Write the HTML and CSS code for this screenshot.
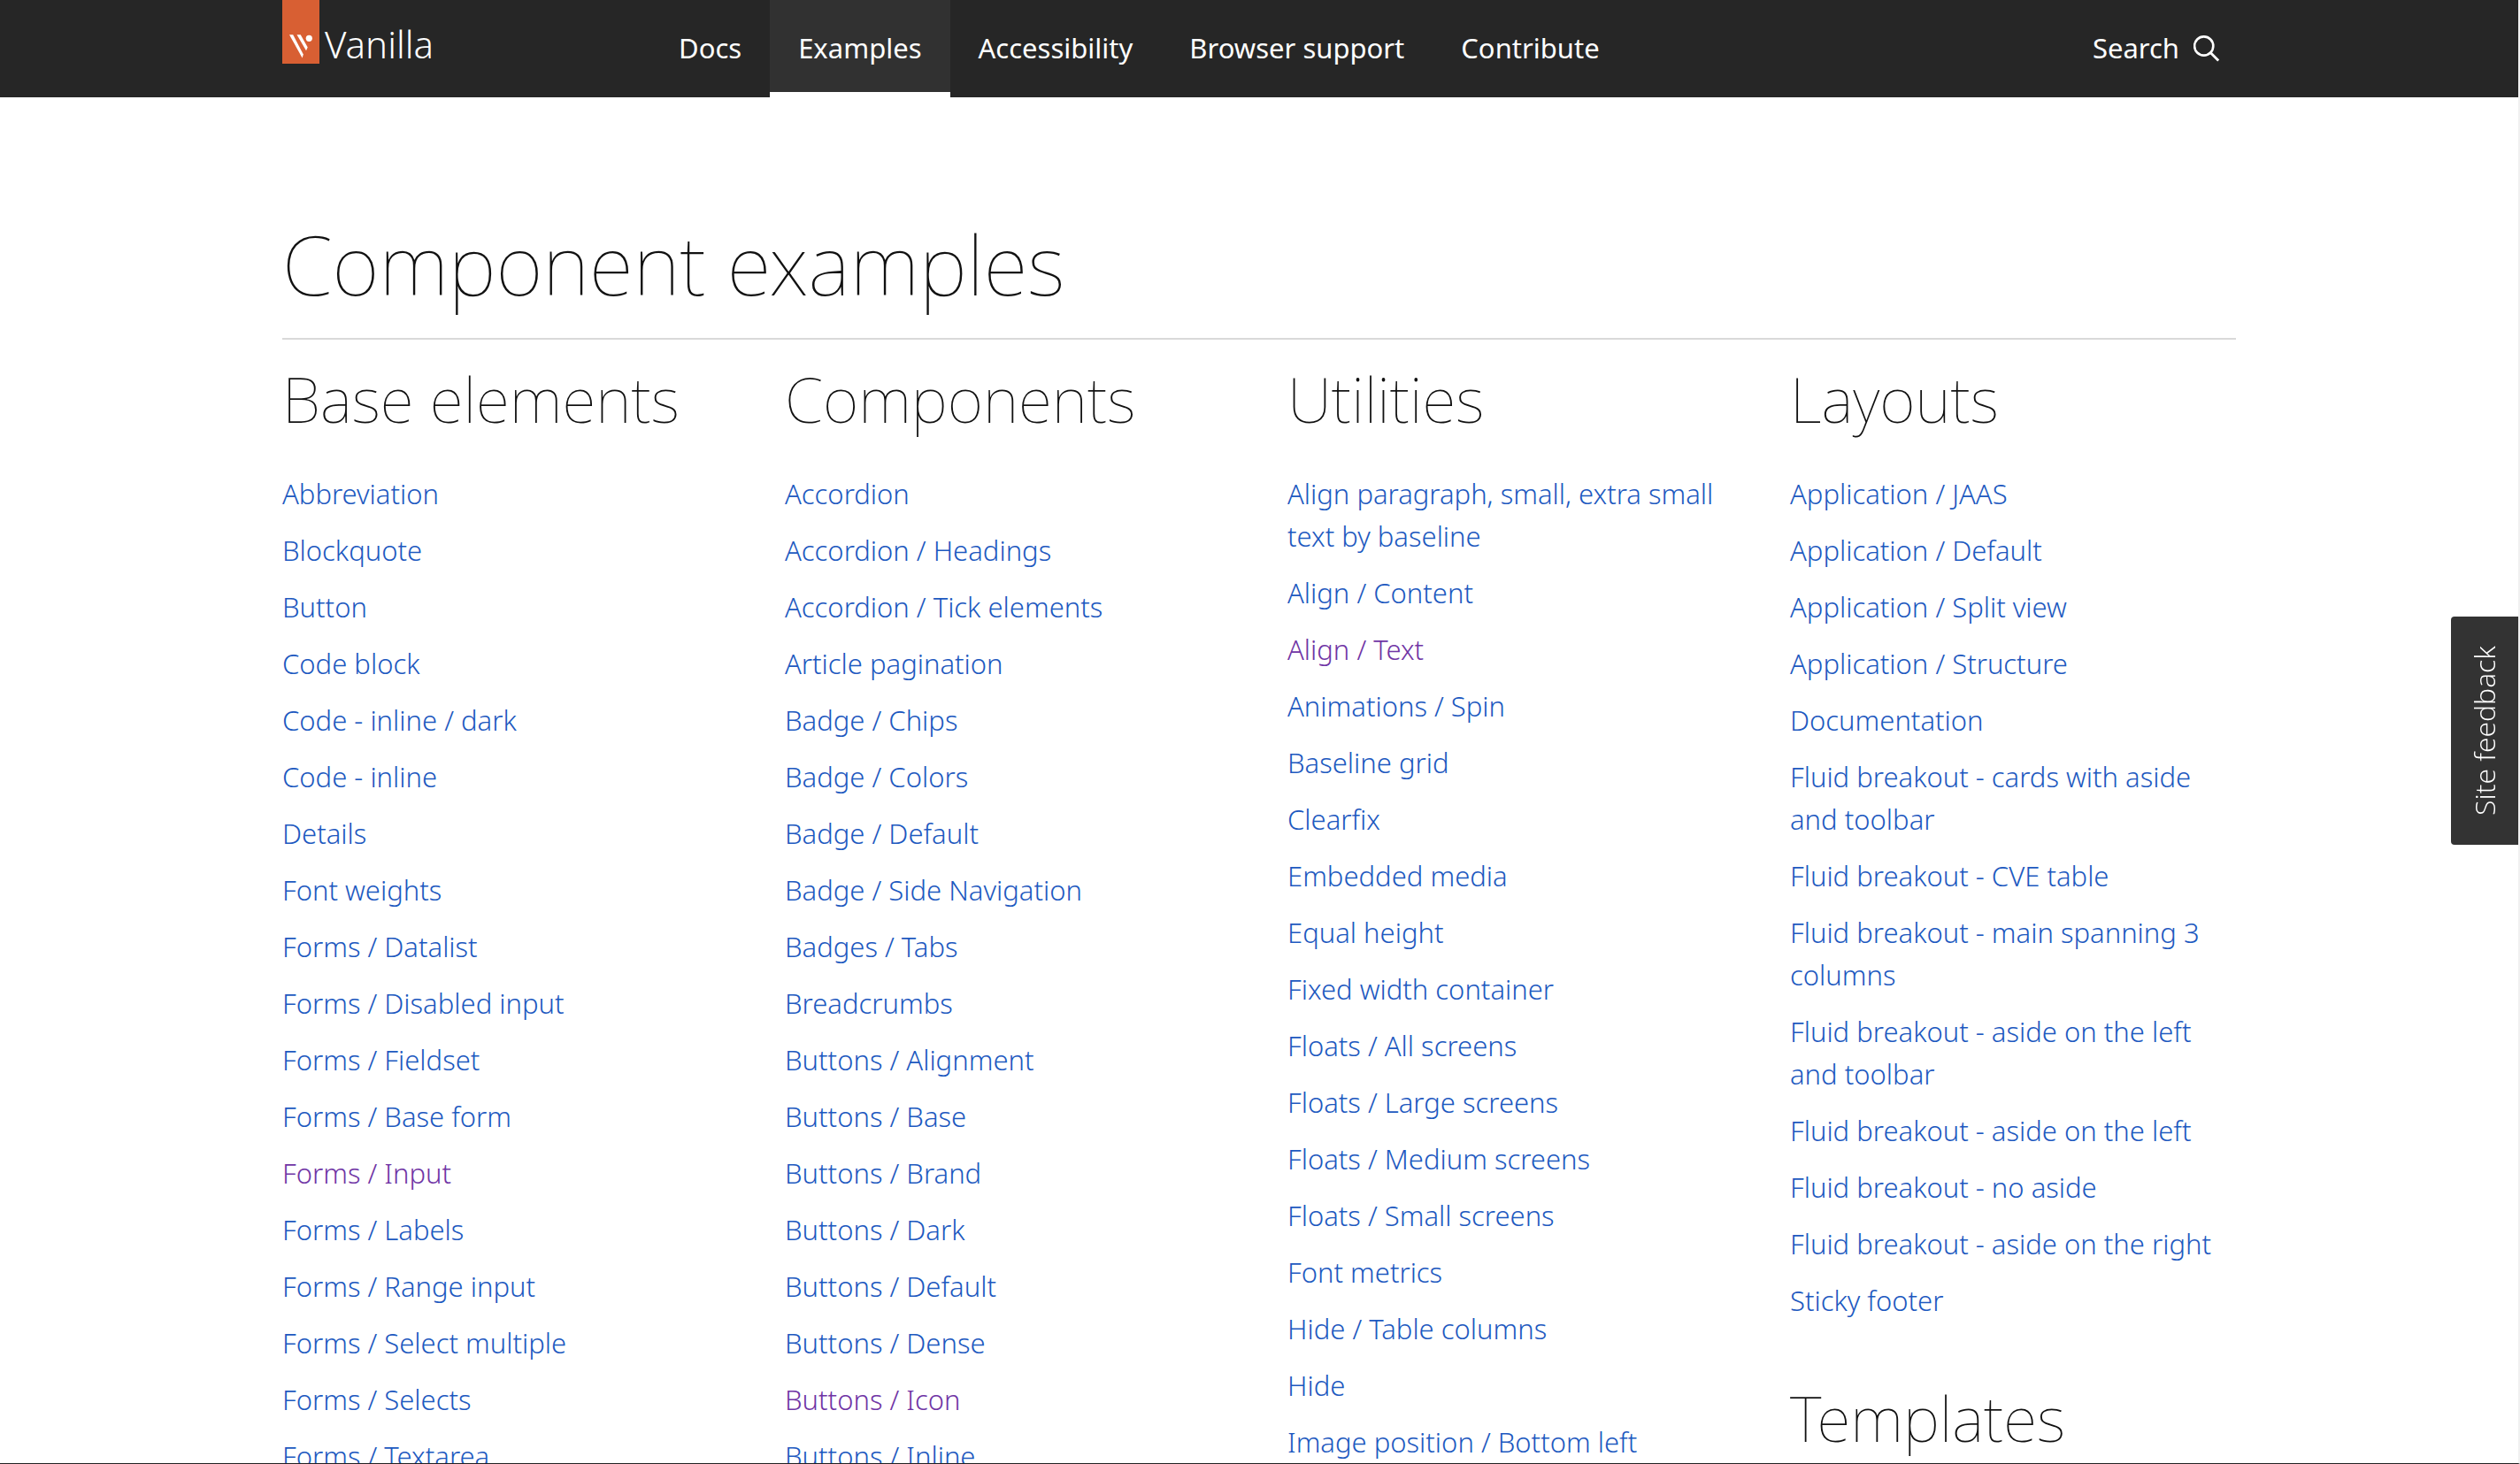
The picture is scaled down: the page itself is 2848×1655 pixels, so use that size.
FILE: index.html
```html
<!DOCTYPE html>
<html lang="en">
<head>
<meta charset="utf-8">
<title>Component examples | Vanilla</title>
<link rel="stylesheet" href="styles.css">
</head>
<body>
<header class="navigation">
  <div class="navigation-row">
    <a class="logo" href="#">
      <span class="logo-tag">
        <svg class="logo-mark" viewBox="0 0 42 72" aria-hidden="true">
          <path d="M8 39.300h4.200l11.600 22.200-1.200 4z" fill="#fff"/>
          <path d="M16.500 39.300h4.200l8 14.200-1.700 3.700z" fill="#fff"/>
          <circle cx="30.300" cy="43.300" r="3.600" fill="#fff"/>
        </svg>
      </span>
      <span class="logo-name">Vanilla</span>
    </a>
    <nav class="navigation-links" aria-label="Main">
      <a href="#">Docs</a>
      <a class="is-selected" href="#" aria-current="page">Examples</a>
      <a href="#">Accessibility</a>
      <a href="#">Browser support</a>
      <a href="#">Contribute</a>
    </nav>
    <button class="search" type="button">Search
      <svg class="search-icon" viewBox="0 0 32 32" aria-hidden="true">
        <circle cx="11.700" cy="14" r="10.600" fill="none" stroke="#fff" stroke-width="2.600"/>
        <path d="M19.200 21.600l9 9" fill="none" stroke="#fff" stroke-width="2.800"/>
      </svg>
    </button>
  </div>
</header>
<main class="content">
  <h1>Component examples</h1>
  <div class="columns">
    <section>
      <h2>Base elements</h2>
      <ul>
        <li><a href="#">Abbreviation</a></li>
        <li><a href="#">Blockquote</a></li>
        <li><a href="#">Button</a></li>
        <li><a href="#">Code block</a></li>
        <li><a href="#">Code - inline / dark</a></li>
        <li><a href="#">Code - inline</a></li>
        <li><a href="#">Details</a></li>
        <li><a href="#">Font weights</a></li>
        <li><a href="#">Forms / Datalist</a></li>
        <li><a href="#">Forms / Disabled input</a></li>
        <li><a href="#">Forms / Fieldset</a></li>
        <li><a href="#">Forms / Base form</a></li>
        <li><a class="is-visited" href="#">Forms / Input</a></li>
        <li><a href="#">Forms / Labels</a></li>
        <li><a href="#">Forms / Range input</a></li>
        <li><a href="#">Forms / Select multiple</a></li>
        <li><a href="#">Forms / Selects</a></li>
        <li><a href="#">Forms / Textarea</a></li>
      </ul>
    </section>
    <section>
      <h2>Components</h2>
      <ul>
        <li><a href="#">Accordion</a></li>
        <li><a href="#">Accordion / Headings</a></li>
        <li><a href="#">Accordion / Tick elements</a></li>
        <li><a href="#">Article pagination</a></li>
        <li><a href="#">Badge / Chips</a></li>
        <li><a href="#">Badge / Colors</a></li>
        <li><a href="#">Badge / Default</a></li>
        <li><a href="#">Badge / Side Navigation</a></li>
        <li><a href="#">Badges / Tabs</a></li>
        <li><a href="#">Breadcrumbs</a></li>
        <li><a href="#">Buttons / Alignment</a></li>
        <li><a href="#">Buttons / Base</a></li>
        <li><a href="#">Buttons / Brand</a></li>
        <li><a href="#">Buttons / Dark</a></li>
        <li><a href="#">Buttons / Default</a></li>
        <li><a href="#">Buttons / Dense</a></li>
        <li><a class="is-visited" href="#">Buttons / Icon</a></li>
        <li><a href="#">Buttons / Inline</a></li>
      </ul>
    </section>
    <section>
      <h2>Utilities</h2>
      <ul>
        <li><a href="#">Align paragraph, small, extra small text by baseline</a></li>
        <li><a href="#">Align / Content</a></li>
        <li><a class="is-visited" href="#">Align / Text</a></li>
        <li><a href="#">Animations / Spin</a></li>
        <li><a href="#">Baseline grid</a></li>
        <li><a href="#">Clearfix</a></li>
        <li><a href="#">Embedded media</a></li>
        <li><a href="#">Equal height</a></li>
        <li><a href="#">Fixed width container</a></li>
        <li><a href="#">Floats / All screens</a></li>
        <li><a href="#">Floats / Large screens</a></li>
        <li><a href="#">Floats / Medium screens</a></li>
        <li><a href="#">Floats / Small screens</a></li>
        <li><a href="#">Font metrics</a></li>
        <li><a href="#">Hide / Table columns</a></li>
        <li><a href="#">Hide</a></li>
        <li><a href="#">Image position / Bottom left</a></li>
      </ul>
    </section>
    <section>
      <h2>Layouts</h2>
      <ul>
        <li><a href="#">Application / JAAS</a></li>
        <li><a href="#">Application / Default</a></li>
        <li><a href="#">Application / Split view</a></li>
        <li><a href="#">Application / Structure</a></li>
        <li><a href="#">Documentation</a></li>
        <li><a href="#">Fluid breakout - cards with aside and toolbar</a></li>
        <li><a href="#">Fluid breakout - CVE table</a></li>
        <li><a href="#">Fluid breakout - main spanning 3 columns</a></li>
        <li><a href="#">Fluid breakout - aside on the left and toolbar</a></li>
        <li><a href="#">Fluid breakout - aside on the left</a></li>
        <li><a href="#">Fluid breakout - no aside</a></li>
        <li><a href="#">Fluid breakout - aside on the right</a></li>
        <li><a href="#">Sticky footer</a></li>
      </ul>
      <h2>Templates</h2>
    </section>
  </div>
</main>
<button class="feedback" type="button">Site feedback</button>
</body>
</html>
```
FILE: styles.css
```css
* {
  box-sizing: border-box;
}

body {
  margin: 0;
  height: 100vh;
  overflow: hidden;
  border-right: 2px solid #f0f0f0;
  border-bottom: 1px solid #222;
  background: #fff;
  color: #111;
  font: 300 31px/48px "Noto Sans", sans-serif;
}

a {
  color: #1d59c0;
  text-decoration: none;
}

a:hover {
  text-decoration: underline;
}

.is-visited {
  color: #7035a5;
}

.navigation {
  background: #262626;
}

.navigation-row,
.content {
  max-width: 2304px;
  margin: 0 auto;
  padding: 0 48px;
}

.navigation-row {
  display: flex;
  font-weight: 400;
}

.navigation a,
.search {
  color: #fff;
}

.logo {
  display: flex;
  gap: 6px;
  width: 416px;
}

.logo-tag {
  width: 42px;
  height: 72px;
  background: #d85f33;
}

.logo-mark {
  display: block;
  width: 42px;
  height: 72px;
}

.logo-name {
  padding-top: 26px;
  font-size: 42px;
  font-weight: 300;
}

.navigation-links {
  display: flex;
}

.navigation-links a {
  padding: 30px 32px 26px;
  border-bottom: 6px solid transparent;
}

.navigation-links .is-selected {
  border-bottom-color: #fff;
  background: #313131;
}

.search {
  display: flex;
  align-items: center;
  gap: 16px;
  margin-left: auto;
  padding: 0 16px 2px 0;
  border: 0;
  background: none;
  font: inherit;
}

.search-icon {
  width: 32px;
  height: 32px;
}

h1,
h2 {
  margin: 0;
  font-weight: 100;
}

h1 {
  margin-top: 125px;
  padding-bottom: 19px;
  border-bottom: 2px solid #d9d9d9;
  font-size: 92px;
  line-height: 128px;
}

h2 {
  margin: 19px 0 35px;
  font-size: 70px;
  line-height: 96px;
}

ul + h2 {
  margin-top: 45px;
}

.columns {
  display: grid;
  grid-template-columns: repeat(4, 1fr);
  gap: 64px;
}

ul {
  margin: 0;
  padding: 0;
  list-style: none;
}

li {
  padding-bottom: 16px;
}

.feedback {
  position: fixed;
  top: 697px;
  right: 2px;
  width: 76px;
  height: 258px;
  padding: 0;
  border: 0;
  border-radius: 0 4px 4px 0;
  background: #333;
  color: #fff;
  font: 300 32px/76px "Open Sans", sans-serif;
  writing-mode: vertical-rl;
  transform: rotate(180deg);
}
```
